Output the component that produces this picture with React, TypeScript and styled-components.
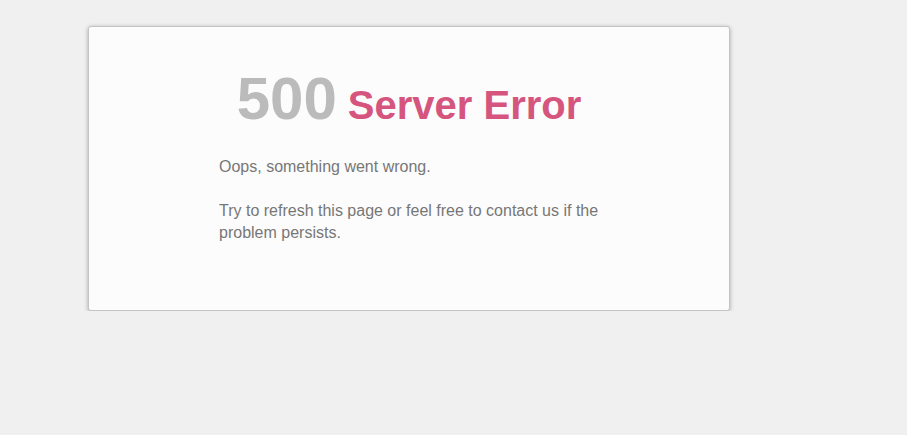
import React from 'react'
import styled, { createGlobalStyle } from 'styled-components'

const GlobalStyle = createGlobalStyle`
  html, body {
    margin: 0;
    padding: 0;
    background: #f0f0f0;
    font-family: "Liberation Sans", Arial, sans-serif;
  }
`

const Page = styled.div`
  padding: 26px 0 0 88px;
`

const Card = styled.div`
  box-sizing: border-box;
  width: 642px;
  height: 285px;
  background: #fcfcfc;
  border: 1px solid #c4c4c4;
  border-radius: 3px;
  box-shadow: 0 1px 4px rgba(0, 0, 0, 0.3);
  padding: 40px 0 0;
`

const Title = styled.h1`
  margin: 0;
  text-align: center;
  font-weight: bold;
  line-height: 64px;
  font-size: 40px;
  color: #d5557e;
`

const Code = styled.span`
  font-size: 60px;
  color: #bbbbbb;
`

const Body = styled.div`
  width: 384px;
  margin: 19px 0 0 130px;
  font-size: 16px;
  line-height: 22px;
  color: #777777;
`

const Para = styled.p`
  margin: 0 0 22px;
`

export default function App() {
  return (
    <Page>
      <GlobalStyle />
      <Card>
        <Title>
          <Code>500</Code> Server Error
        </Title>
        <Body>
          <Para>Oops, something went wrong.</Para>
          <Para>Try to refresh this page or feel free to contact us if the problem persists.</Para>
        </Body>
      </Card>
    </Page>
  )
}
